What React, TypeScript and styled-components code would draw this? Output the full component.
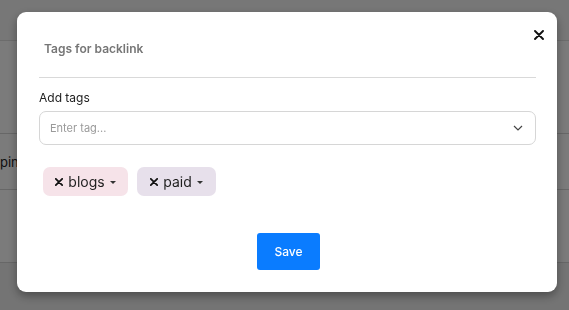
import React from "react";
import styled, { createGlobalStyle } from "styled-components";

const Global = createGlobalStyle`
  html, body { margin: 0; padding: 0; }
  body { font-family: Inter, "Noto Sans", sans-serif; background: #f6f6f6; width: 569px; height: 310px; overflow: hidden; }
`;

const Page = styled.div`
  display: flex;
  flex-direction: column;
  width: 569px;
  height: 310px;
  background: #f7f7f7;
`;

const TopBar = styled.div`
  height: 40px;
  background: #eeeeee;
  border-bottom: 1px solid #d8d8d8;
`;

const Filler = styled.div<{ $h: number }>`
  height: ${(p) => p.$h}px;
  border-bottom: 1px solid #cfcfcf;
  display: flex;
  align-items: center;
  font-size: 13px;
  color: #222;
`;

const FooterBand = styled.div`
  flex: 1;
  background: #e9e9e9;
`;

const Overlay = styled.div`
  position: fixed;
  inset: 0;
  background: rgba(0, 0, 0, 0.5);
  padding: 12px 0 0 17px;
`;

const Modal = styled.div`
  position: relative;
  width: 540px;
  height: 280px;
  background: #fff;
  border-radius: 9px;
  box-shadow: 0 4px 10px rgba(0, 0, 0, 0.35);
  padding: 0 21px 0 22px;
  box-sizing: border-box;
  display: flex;
  flex-direction: column;
`;

const Header = styled.div`
  height: 65px;
  border-bottom: 1px solid #d9d9d9;
  display: flex;
  align-items: flex-start;
`;

const Title = styled.h2`
  margin: 30px 0 0 5px;
  font-size: 12px;
  line-height: 14px;
  font-weight: 600;
  color: #767676;
`;

const CloseButton = styled.button`
  position: absolute;
  top: 13px;
  right: 8px;
  width: 20px;
  height: 20px;
  border: none;
  background: none;
  padding: 0;
  display: flex;
  align-items: center;
  justify-content: center;
  cursor: pointer;
`;

const Label = styled.label`
  margin-top: 12px;
  font-size: 12px;
  line-height: 15px;
  color: #222;
  font-weight: 400;
`;

const SelectBox = styled.div`
  margin-top: 6px;
  height: 34px;
  border: 1px solid #d6d6d6;
  border-radius: 7px;
  box-sizing: border-box;
  display: flex;
  align-items: center;
  padding: 0 12px 0 10px;
`;

const Placeholder = styled.span`
  flex: 1;
  font-size: 11px;
  color: #9a9a9a;
`;

const Chips = styled.div`
  margin-top: 22px;
  display: flex;
  gap: 9px;
  padding-left: 4px;
`;

const Chip = styled.div<{ $bg: string; $w: number }>`
  height: 29px;
  width: ${(p) => p.$w}px;
  background: ${(p) => p.$bg};
  border-radius: 7px;
  display: flex;
  align-items: center;
  justify-content: center;
  gap: 5px;
  font-size: 14px;
  color: #1f1f1f;
  box-sizing: border-box;
`;

const Caret = styled.span`
  width: 0;
  height: 0;
  border-left: 3px solid transparent;
  border-right: 3px solid transparent;
  border-top: 3px solid #333;
  margin-top: 2px;
`;

const Footer = styled.div`
  margin-top: 37px;
  display: flex;
  justify-content: center;
`;

const SaveButton = styled.button`
  width: 63px;
  height: 37px;
  border: none;
  border-radius: 3px;
  background: #0a7cff;
  color: #fff;
  font-family: Inter, sans-serif;
  font-size: 12px;
  font-weight: 500;
  margin-left: 2px;
`;

const XIcon = ({ size, stroke }: { size: number; stroke: number }) => (
  <svg width={size} height={size} viewBox="0 0 10 10">
    <path d="M1 1 L9 9 M9 1 L1 9" stroke="#111" strokeWidth={stroke} strokeLinecap="round" />
  </svg>
);

export default function App() {
  return (
    <>
      <Global />
      <Page>
        <TopBar />
        <Filler $h={92} />
        <Filler $h={55}>pin</Filler>
        <Filler $h={72} />
        <FooterBand />
      </Page>
      <Overlay>
        <Modal>
          <Header>
            <Title>Tags for backlink</Title>
          </Header>
          <CloseButton aria-label="Close">
            <XIcon size={10} stroke={1.9} />
          </CloseButton>
          <Label>Add tags</Label>
          <SelectBox>
            <Placeholder>Enter tag...</Placeholder>
            <svg width="10" height="6" viewBox="0 0 10 6">
              <path d="M1 1 L5 5 L9 1" fill="none" stroke="#444" strokeWidth="1.2" />
            </svg>
          </SelectBox>
          <Chips>
            <Chip $bg="#f6e3e9" $w={85}>
              <XIcon size={8} stroke={2.2} />
              <span>blogs</span>
              <Caret />
            </Chip>
            <Chip $bg="#e7e0eb" $w={79}>
              <XIcon size={8} stroke={2.2} />
              <span>paid</span>
              <Caret />
            </Chip>
          </Chips>
          <Footer>
            <SaveButton>Save</SaveButton>
          </Footer>
        </Modal>
      </Overlay>
    </>
  );
}
